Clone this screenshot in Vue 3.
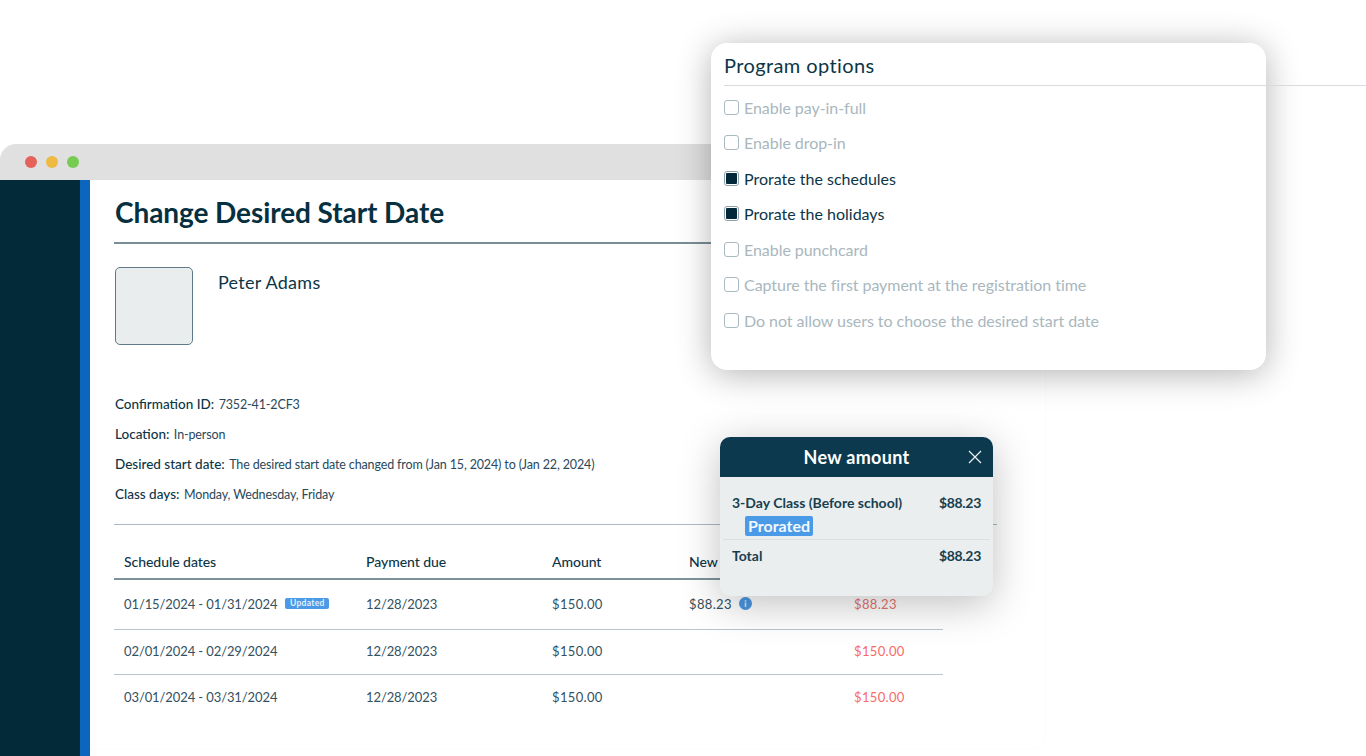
<script setup>
const options = [
  { label: 'Enable pay-in-full', on: false },
  { label: 'Enable drop-in', on: false },
  { label: 'Prorate the schedules', on: true },
  { label: 'Prorate the holidays', on: true },
  { label: 'Enable punchcard', on: false },
  { label: 'Capture the first payment at the registration time', on: false },
  { label: 'Do not allow users to choose the desired start date', on: false }
]
const info = [
  ['Confirmation ID:', '7352-41-2CF3'],
  ['Location:', 'In-person'],
  ['Desired start date:', 'The desired start date changed from (Jan 15, 2024) to (Jan 22, 2024)'],
  ['Class days:', 'Monday, Wednesday, Friday']
]
const rows = [
  { dates: '01/15/2024 - 01/31/2024', updated: true, due: '12/28/2023', amount: '$150.00', next: '$88.23', bal: '$88.23', faded: true },
  { dates: '02/01/2024 - 02/29/2024', due: '12/28/2023', amount: '$150.00', next: '', bal: '$150.00' },
  { dates: '03/01/2024 - 03/31/2024', due: '12/28/2023', amount: '$150.00', next: '', bal: '$150.00' }
]
</script>

<template>
  <div class="stage">
    <div class="window">
      <div class="titlebar">
        <span class="dot red"></span><span class="dot yellow"></span><span class="dot green"></span>
      </div>
      <div class="body">
        <aside class="side"></aside>
        <main class="main">
          <h1 class="title">Change Desired Start Date</h1>
          <div class="profile">
            <div class="avatar"></div>
            <div class="name">Peter Adams</div>
          </div>
          <div class="info">
            <div v-for="i in info" :key="i[0]" class="info-row">
              <span class="info-key">{{ i[0] }}</span><span class="info-val">{{ i[1] }}</span>
            </div>
          </div>
          <div class="rule"></div>
          <div class="table">
            <div class="tr head">
              <div>Schedule dates</div><div>Payment due</div><div>Amount</div><div>New amount</div><div>Balance</div>
            </div>
            <div v-for="(r, n) in rows" :key="r.dates" class="tr row" :class="{ first: n === 0 }">
              <div class="dates">{{ r.dates }}<span v-if="r.updated" class="updated">Updated</span></div>
              <div>{{ r.due }}</div>
              <div class="money">{{ r.amount }}</div>
              <div class="next money">
                {{ r.next }}
                <svg v-if="r.next" class="info-icon" viewBox="0 0 13 13" width="13" height="13">
                  <circle cx="6.5" cy="6.5" r="6.5" fill="#4a97e4" />
                  <rect x="5.7" y="5.4" width="1.6" height="4.4" fill="#d8e8f8" />
                  <rect x="5.7" y="3.2" width="1.6" height="1.5" fill="#d8e8f8" />
                </svg>
              </div>
              <div class="bal money" :class="{ faded: r.faded }">{{ r.bal }}</div>
            </div>
          </div>
        </main>
      </div>
    </div>

    <section class="options">
      <h2 class="options-title">Program options</h2>
      <div class="options-list">
        <div v-for="o in options" :key="o.label" class="option" :class="{ on: o.on }">
          <span class="box"><span v-if="o.on" class="fill"></span></span>
          <span>{{ o.label }}</span>
        </div>
      </div>
    </section>

    <section class="amount">
      <header class="amount-head">
        <span>New amount</span>
        <svg class="close" viewBox="0 0 14 14" width="14" height="14">
          <path d="M1 1 13 13M13 1 1 13" stroke="#eef2f4" stroke-width="1.2" fill="none" />
        </svg>
      </header>
      <div class="amount-body">
        <div class="amount-line"><span>3-Day Class (Before school)</span><span class="price">$88.23</span></div>
        <span class="prorated">Prorated</span>
        <div class="amount-sep"></div>
        <div class="amount-line total"><span>Total</span><span class="price">$88.23</span></div>
      </div>
    </section>
  </div>
</template>

<style>
html, body { margin: 0; background: #fff; overflow: hidden; }
</style>

<style scoped>
.stage {
  position: relative;
  width: 1366px;
  height: 756px;
  overflow: hidden;
  padding-top: 144px;
  box-sizing: border-box;
  font-family: "Lato", "Noto Sans", sans-serif;
  color: #0c3547;
  background: #fff;
}
.window { width: 1046px; height: 612px; display: flex; flex-direction: column; }
.titlebar {
  height: 36px;
  flex: none;
  background: #e0e0e0;
  border-radius: 16px 0 0 0;
  display: flex;
  align-items: center;
  gap: 9px;
  padding: 0 0 0 25px;
}
.dot { width: 12px; height: 12px; border-radius: 50%; }
.red { background: #e5625a; }
.yellow { background: #eeba44; }
.green { background: #75cc50; }
.body { flex: 1; display: flex; min-height: 0; }
.side { width: 80px; flex: none; background: #022a38; border-right: 10px solid #0d66bd; }
.main {
  flex: 1;
  height: 570px;
  padding: 0 0 0 24px;
  box-sizing: border-box;
  border-right: 1px solid #fcfcfc;
  border-bottom: 1px solid #fcfcfc;
  border-bottom-right-radius: 16px;
}
.title {
  margin: 0;
  width: 882px;
  height: 62px;
  padding-left: 1px;
  box-sizing: content-box;
  line-height: 64px;
  font-size: 28px;
  font-weight: 700;
  letter-spacing: -0.08px;
  color: #06303f;
  border-bottom: 2px solid #7a8d96;
}
.profile { display: flex; margin-top: 23px; height: 78px; padding-left: 1px; }
.avatar {
  width: 78px;
  height: 78px;
  box-sizing: border-box;
  border: 1px solid #5e7a88;
  border-radius: 5px;
  background: #e9edee;
}
.name { margin-left: 25px; font-size: 18px; line-height: 30px; letter-spacing: 0.27px; }
.info { margin-top: 44px; padding-left: 1px; }
.info-row { height: 30px; line-height: 30px; font-size: 13.5px; letter-spacing: 0; display: flex; align-items: baseline; }
.info-key { font-weight: 500; margin-right: 4.5px; color: #0c3547; }
.info-val { font-size: 12.5px; color: #29495a; letter-spacing: -0.14px; }
.rule { width: 883px; height: 1px; margin-top: 15px; background: #a9bbc4; }
.table { width: 829px; margin-top: 20px; font-size: 13px; letter-spacing: -0.1px; color: #33505f; }
.tr { display: grid; grid-template-columns: 252px 186px 137px 165px 89px; align-items: center; }
.tr > div:first-child { padding-left: 10px; }
.head {
  height: 35px;
  padding-bottom: 1px;
  font-size: 14px;
  letter-spacing: -0.05px;
  font-weight: 500;
  color: #0c3547;
  border-bottom: 2px solid #7e919b;
  box-sizing: border-box;
}
.row { height: 45px; padding-bottom: 2px; border-bottom: 1px solid #b9c4cb; box-sizing: border-box; }
.row.first { height: 50px; }
.row:last-child { border-bottom: 0; }
.dates { display: flex; align-items: center; }
.money { letter-spacing: 0.35px; }
.updated {
  margin-left: 8px;
  width: 44px;
  height: 11px;
  line-height: 11px;
  text-align: center;
  font-size: 8.5px;
  font-weight: 700;
  color: #e4f0fb;
  background: #4a9ae8;
  border-radius: 2px;
  letter-spacing: 0.3px;
}
.next { display: flex; align-items: center; gap: 7px; }
.bal { color: #f96a66; white-space: nowrap; }
.faded { color: #e8736e; }

.options {
  position: absolute;
  left: 711px;
  top: 43px;
  width: 555px;
  height: 327px;
  background: #fff;
  border-radius: 16px;
  box-shadow: 0 4px 34px rgba(0, 0, 0, 0.3);
}
.options::after {
  content: "";
  position: absolute;
  left: 13px;
  top: 42px;
  width: 642px;
  height: 1px;
  background: #d7dcde;
}
.options-title {
  margin: 0;
  padding: 8px 0 0 13px;
  font-size: 20px;
  line-height: 29px;
  font-weight: 400;
  letter-spacing: 0.4px;
  color: #0c3547;
}
.options-list { margin-top: 9.5px; padding-left: 13px; }
.option {
  height: 35.5px;
  display: flex;
  align-items: center;
  gap: 5px;
  font-size: 16px;
  letter-spacing: -0.05px;
  color: #a9b7be;
}
.option.on { color: #0c3547; letter-spacing: 0; }
.box {
  width: 15px;
  height: 15px;
  box-sizing: border-box;
  border: 1.5px solid #a9bac1;
  border-radius: 3px;
  background: #fff;
  display: flex;
  align-items: center;
  justify-content: center;
}
.on .box { border-color: #8fa2ab; }
.fill { width: 11px; height: 11px; background: #02283a; border-radius: 1px; }

.amount {
  position: absolute;
  left: 720px;
  top: 437px;
  width: 273px;
  height: 159px;
  border-radius: 10px;
  background: #ebeeef;
  overflow: hidden;
  box-shadow: 0 8px 40px rgba(0, 0, 0, 0.25);
}
.amount-head {
  position: relative;
  height: 40px;
  background: #0c394e;
  color: #fff;
  display: flex;
  align-items: center;
  justify-content: center;
  font-size: 18px;
  font-weight: 700;
  letter-spacing: 0.3px;
}
.close { position: absolute; right: 11px; top: 13px; }
.amount-body { padding: 15px 12px 0 12px; position: relative; }
.amount-line {
  display: flex;
  justify-content: space-between;
  font-size: 14px;
  line-height: 22px;
  font-weight: 700;
  color: #17404f;
  letter-spacing: 0;
}
.price { letter-spacing: -0.3px; }
.prorated {
  display: block;
  width: 68px;
  height: 20px;
  line-height: 20px;
  margin: 2px 0 0 13px;
  text-align: center;
  border-radius: 2px;
  background: #4a9ae8;
  color: #f3f8fd;
  font-size: 16px;
  font-weight: 700;
}
.amount-sep { height: 1px; background: #dcdfe0; margin: 3px -9px 0; }
.total { margin-top: 5px; }
</style>
